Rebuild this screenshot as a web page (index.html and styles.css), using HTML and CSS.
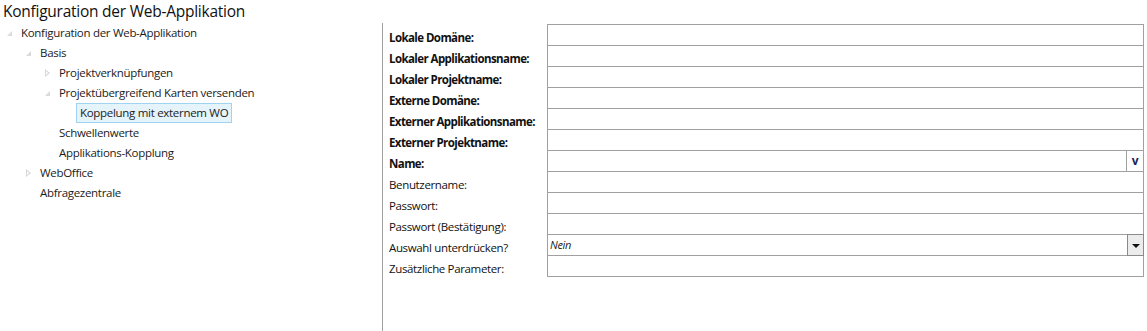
FILE: index.html
```html
<!DOCTYPE html>
<html lang="de">
<head>
    <meta charset="UTF-8">
    <title>Konfiguration der Web-Applikation</title>
    <link rel="stylesheet" href="styles.css">
</head>
<body>
    <div class="page">
        <h1 class="page-title">Konfiguration der Web-Applikation</h1>
        <div class="main">
            <div class="tree">
                <div class="node l0"><span class="toggle open"></span><span class="node-text">Konfiguration der Web-Applikation</span></div>
                <div class="node l1"><span class="toggle open"></span><span class="node-text">Basis</span></div>
                <div class="node l2"><span class="toggle closed"></span><span class="node-text">Projektverknüpfungen</span></div>
                <div class="node l2"><span class="toggle open"></span><span class="node-text">Projektübergreifend Karten versenden</span></div>
                <div class="node l3"><span class="toggle"></span><span class="node-text selected">Koppelung mit externem WO</span></div>
                <div class="node l2"><span class="toggle"></span><span class="node-text">Schwellenwerte</span></div>
                <div class="node l2"><span class="toggle"></span><span class="node-text">Applikations-Kopplung</span></div>
                <div class="node l1"><span class="toggle closed"></span><span class="node-text">WebOffice</span></div>
                <div class="node l1"><span class="toggle"></span><span class="node-text">Abfragezentrale</span></div>
            </div>

            <div class="form">
                <div class="label bold">Lokale Domäne:</div>
                <div class="field"></div>
                <div class="label bold">Lokaler Applikationsname:</div>
                <div class="field"></div>
                <div class="label bold">Lokaler Projektname:</div>
                <div class="field"></div>
                <div class="label bold">Externe Domäne:</div>
                <div class="field"></div>
                <div class="label bold">Externer Applikationsname:</div>
                <div class="field"></div>
                <div class="label bold">Externer Projektname:</div>
                <div class="field"></div>
                <div class="label bold">Name:</div>
                <div class="field combo">
                    <span class="value"></span>
                    <span class="lookup-btn">v</span>
                </div>
                <div class="label">Benutzername:</div>
                <div class="field"></div>
                <div class="label">Passwort:</div>
                <div class="field"></div>
                <div class="label">Passwort (Bestätigung):</div>
                <div class="field"></div>
                <div class="label">Auswahl unterdrücken?</div>
                <div class="field combo">
                    <span class="value italic">Nein</span>
                    <span class="drop-btn"></span>
                </div>
                <div class="label">Zusätzliche Parameter:</div>
                <div class="field"></div>
            </div>
        </div>
    </div>
</body>
</html>
```

FILE: styles.css
```css
* {
    margin: 0;
    padding: 0;
    box-sizing: border-box;
}

body {
    background: #ffffff;
    font-family: 'Open Sans', 'Noto Sans', 'Liberation Sans', sans-serif;
    color: #1b1b1b;
    overflow: hidden;
}

.page {
    width: 1147px;
    height: 331px;
    padding-right: 3px;
    display: flex;
    flex-direction: column;
}

.page-title {
    height: 23px;
    padding-left: 3px;
    font-size: 15.5px;
    font-weight: 400;
    line-height: 22px;
    color: #111;
    letter-spacing: -0.25px;
}

.main {
    flex: 1;
    display: flex;
}

/* Baum links */
.tree {
    width: 383px;
    border-right: 1px solid #a0a0a0;
}

.node {
    height: 20px;
    display: flex;
    align-items: center;
    font-size: 11.5px;
    letter-spacing: -0.3px;
}

.l0 { padding-left: 4px; }
.l1 { padding-left: 23px; }
.l2 { padding-left: 42px; }
.l3 { padding-left: 63px; }

.toggle {
    width: 13px;
    height: 20px;
    flex-shrink: 0;
    position: relative;
}

/* aufgeklappt: kleines graues Dreieck unten rechts */
.toggle.open::before {
    content: '';
    position: absolute;
    left: 3px;
    top: 8px;
    width: 0;
    height: 0;
    border-left: 5px solid transparent;
    border-bottom: 5px solid #dadada;
}

/* zugeklappt: Dreieck nach rechts, nur Umriss */
.toggle.closed::before {
    content: '';
    position: absolute;
    left: 3px;
    top: 6px;
    border-top: 4px solid transparent;
    border-bottom: 4px solid transparent;
    border-left: 5px solid #d8d8d8;
}
.toggle.closed::after {
    content: '';
    position: absolute;
    left: 4px;
    top: 8px;
    border-top: 2px solid transparent;
    border-bottom: 2px solid transparent;
    border-left: 2.5px solid #ffffff;
}

.node-text {
    padding: 1px 3px;
    border: 1px solid transparent;
    white-space: nowrap;
    line-height: 16px;
}

.node-text.selected {
    background: #e5f3fb;
    border-color: #9fd3ef;
}

/* Formular rechts */
.form {
    flex: 1;
    padding-left: 6px;
    padding-top: 1px;
    display: grid;
    grid-template-columns: 158px 1fr;
    grid-auto-rows: 21px;
    align-content: start;
    font-size: 11.5px;
    letter-spacing: -0.35px;
}

.label {
    line-height: 21px;
    padding-top: 3px;
    color: #111;
    white-space: nowrap;
}

.label.bold {
    font-weight: 700;
    letter-spacing: -0.58px;
}

.field {
    height: 22px;
    border: 1px solid #a0a0a0;
    margin-bottom: -1px;
    background: #fff;
}

.combo {
    display: flex;
    align-items: stretch;
}

.combo .value {
    flex: 1;
    padding-left: 2px;
    line-height: 20px;
    font-size: 11px;
}

.italic {
    font-style: italic;
}

.lookup-btn {
    width: 17px;
    border-left: 1px solid #a0a0a0;
    text-align: center;
    font-weight: 700;
    font-size: 12px;
    line-height: 19px;
    color: #1c2454;
}

.drop-btn {
    width: 17px;
    margin: -1px -1px -1px 0;
    border: 1px solid #8a8a8a;
    background: #ececec;
    position: relative;
}

.drop-btn::before {
    content: '';
    position: absolute;
    left: 4px;
    top: 9px;
    border-left: 4px solid transparent;
    border-right: 4px solid transparent;
    border-top: 4px solid #111;
}
```
